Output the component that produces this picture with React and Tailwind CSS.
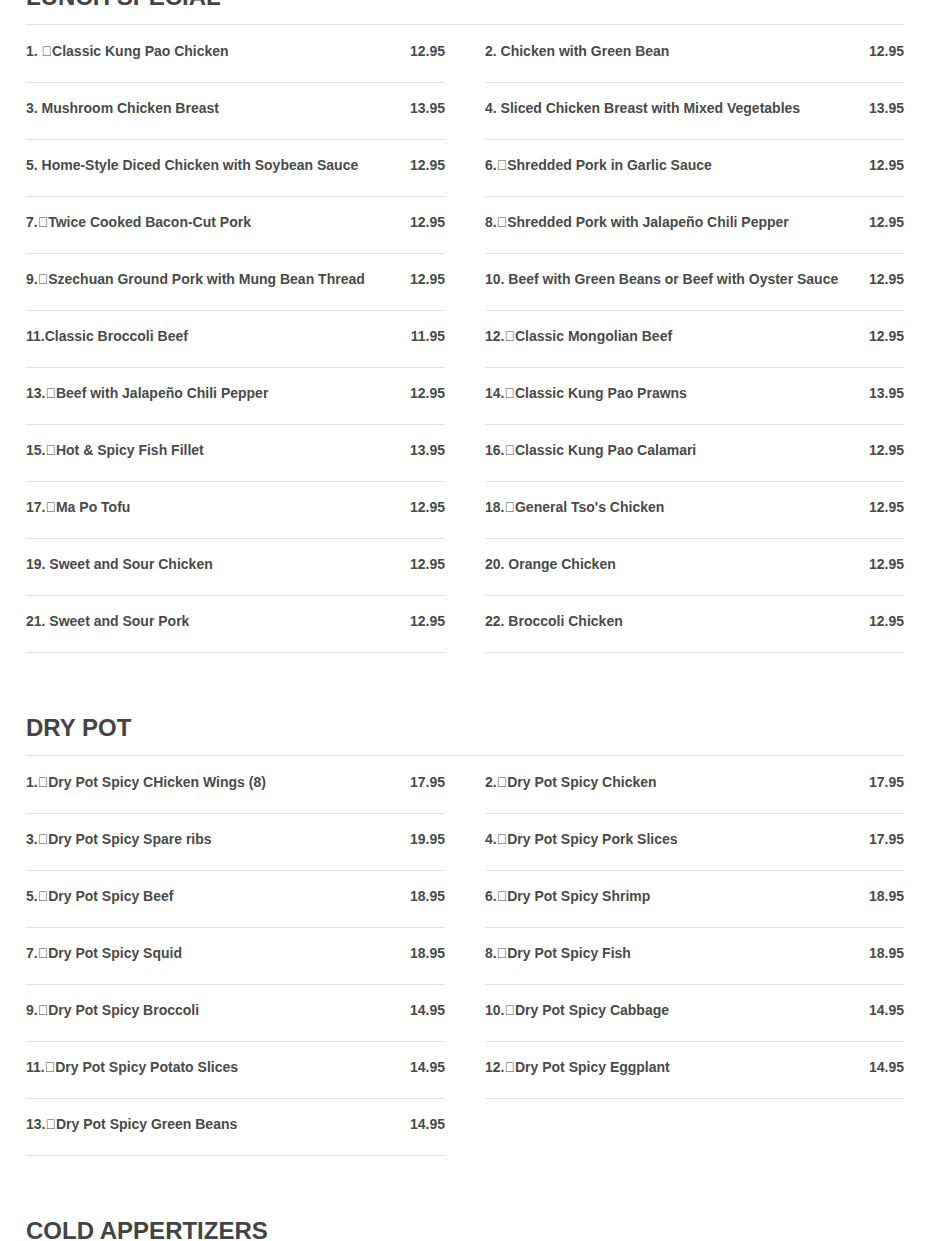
const T = "\uE000";

const lunch = [
  [`1. ${T}Classic Kung Pao Chicken`, "12.95"],
  ["2. Chicken with Green Bean", "12.95"],
  ["3. Mushroom Chicken Breast", "13.95"],
  ["4. Sliced Chicken Breast with Mixed Vegetables", "13.95"],
  ["5. Home-Style Diced Chicken with Soybean Sauce", "12.95"],
  [`6.${T}Shredded Pork in Garlic Sauce`, "12.95"],
  [`7.${T}Twice Cooked Bacon-Cut Pork`, "12.95"],
  [`8.${T}Shredded Pork with Jalapeño Chili Pepper`, "12.95"],
  [`9.${T}Szechuan Ground Pork with Mung Bean Thread`, "12.95"],
  ["10. Beef with Green Beans or Beef with Oyster Sauce", "12.95"],
  ["11.Classic Broccoli Beef", "11.95"],
  [`12.${T}Classic Mongolian Beef`, "12.95"],
  [`13.${T}Beef with Jalapeño Chili Pepper`, "12.95"],
  [`14.${T}Classic Kung Pao Prawns`, "13.95"],
  [`15.${T}Hot & Spicy Fish Fillet`, "13.95"],
  [`16.${T}Classic Kung Pao Calamari`, "12.95"],
  [`17.${T}Ma Po Tofu`, "12.95"],
  [`18.${T}General Tso's Chicken`, "12.95"],
  ["19. Sweet and Sour Chicken", "12.95"],
  ["20. Orange Chicken", "12.95"],
  ["21. Sweet and Sour Pork", "12.95"],
  ["22. Broccoli Chicken", "12.95"],
];

const dryPot = [
  [`1.${T}Dry Pot Spicy CHicken Wings (8)`, "17.95"],
  [`2.${T}Dry Pot Spicy Chicken`, "17.95"],
  [`3.${T}Dry Pot Spicy Spare ribs`, "19.95"],
  [`4.${T}Dry Pot Spicy Pork Slices`, "17.95"],
  [`5.${T}Dry Pot Spicy Beef`, "18.95"],
  [`6.${T}Dry Pot Spicy Shrimp`, "18.95"],
  [`7.${T}Dry Pot Spicy Squid`, "18.95"],
  [`8.${T}Dry Pot Spicy Fish`, "18.95"],
  [`9.${T}Dry Pot Spicy Broccoli`, "14.95"],
  [`10.${T}Dry Pot Spicy Cabbage`, "14.95"],
  [`11.${T}Dry Pot Spicy Potato Slices`, "14.95"],
  [`12.${T}Dry Pot Spicy Eggplant`, "14.95"],
  [`13.${T}Dry Pot Spicy Green Beans`, "14.95"],
];

function MenuSection({ title, items }) {
  return (
    <section className="mb-[59px]">
      <h2 className="border-b border-[#e2e2e2] pb-[11px] text-[24px] font-bold leading-8 text-[#444]">{title}</h2>
      <div className="grid grid-cols-2 gap-x-10 pt-px">
        {items.map(([name, price], i) => (
          <div key={i} className="flex items-start justify-between border-b border-[#e2e2e2] pt-[15px] pb-[21px] text-[14px] font-bold leading-5 text-[#4a4a4a]">
            <span>{name}</span>
            <span className="pl-4">{price}</span>
          </div>
        ))}
      </div>
    </section>
  );
}

export default function App() {
  return (
    <div className="min-h-screen overflow-hidden bg-white font-['Liberation_Sans',Arial,sans-serif]">
      <div className="mx-[26px] -mt-[19px]">
        <MenuSection title="LUNCH SPECIAL" items={lunch} />
        <MenuSection title="DRY POT" items={dryPot} />
        <MenuSection title="COLD APPERTIZERS" items={[]} />
      </div>
    </div>
  );
}
